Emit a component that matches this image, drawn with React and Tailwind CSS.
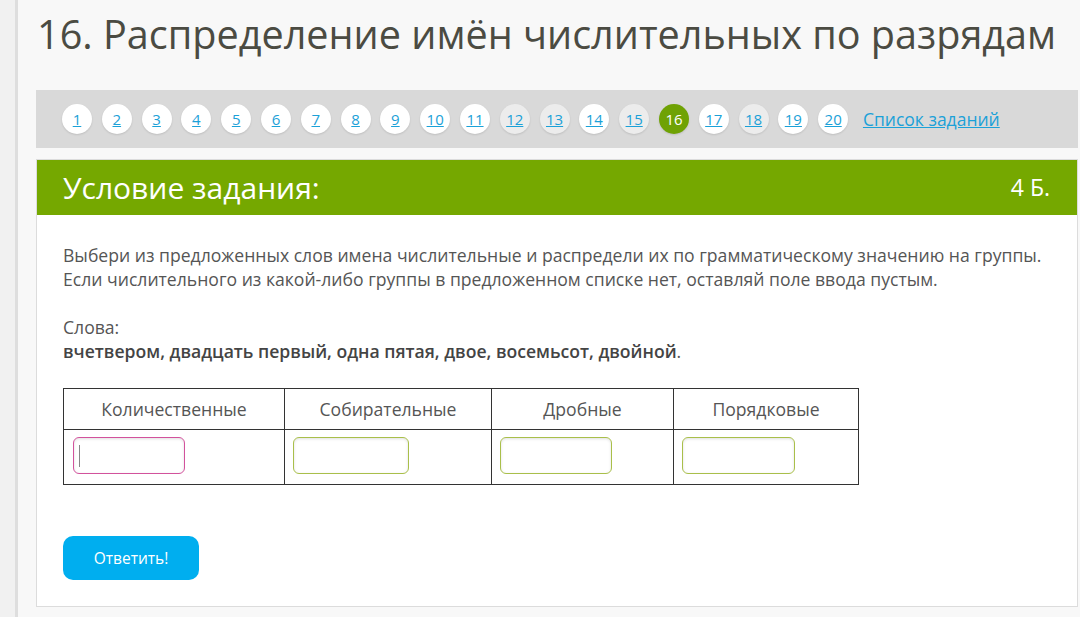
import React from "react";

const pages = [
  { n: 1 }, { n: 2 }, { n: 3 }, { n: 4 }, { n: 5 }, { n: 6 }, { n: 7 }, { n: 8 }, { n: 9 }, { n: 10 },
  { n: 11 }, { n: 12, v: true }, { n: 13, v: true }, { n: 14 }, { n: 15, v: true }, { n: 16, a: true },
  { n: 17 }, { n: 18, v: true }, { n: 19 }, { n: 20 },
];

export default function App() {
  return (
    <div className="flex w-[1080px] h-[617px] overflow-hidden bg-[#f8f8f8]" style={{ fontFamily: '"Open Sans", sans-serif' }}>
      <div className="w-[15px] shrink-0 bg-[#f1f1f1]" />
      <div className="w-[3px] shrink-0 bg-[#dedede]" />
      <div className="w-[1062px] min-w-0 shrink-0 pl-[18px] pr-[2px] flex flex-col">
        <h1 className="text-[39.6px] leading-[56px] text-[#4b4b42] pt-[6px] pl-[1px] whitespace-nowrap">
          16. Распределение имён числительных по разрядам
        </h1>
        <div className="mt-[28px] h-[58px] bg-[#d9d9d9] flex items-center pl-[26px] gap-[9.8px]">
          {pages.map((p) => (
            <div
              key={p.n}
              className={
                "w-[30px] h-[30px] shrink-0 rounded-full flex items-center justify-center text-[15px] shadow-[0_1px_2px_rgba(0,0,0,0.12)] " +
                (p.a ? "bg-[#6fa204] text-white" : p.v ? "bg-[#ececec] text-[#1ba1d8] underline" : "bg-white text-[#1ba1d8] underline")
              }
            >
              {p.n}
            </div>
          ))}
          <a className="ml-[5px] text-[17.5px] text-[#1ba1d8] underline whitespace-nowrap">Список заданий</a>
        </div>
        <div className="mt-[11px] bg-white border border-[#dcdcdc] h-[448px] flex flex-col">
          <div className="h-[55px] bg-[#75a800] flex items-center justify-between pl-[26px] pr-[27px] text-white">
            <span className="text-[30px]">Условие задания:</span>
            <span className="text-[23px]">4 Б.</span>
          </div>
          <div className="pl-[26px] pt-[28px] text-[17.6px] leading-[24px] text-[#555]">
            <p className="whitespace-nowrap">
              Выбери из предложенных слов имена числительные и распредели их по грамматическому значению на группы.
              <br />
              Если числительного из какой-либо группы в предложенном списке нет, оставляй поле ввода пустым.
            </p>
            <p className="mt-[24px]">Слова:</p>
            <p>
              <b className="font-semibold text-[#444]">вчетвером, двадцать первый, одна пятая, двое, восемьсот, двойной</b>.
            </p>
            <table className="mt-[25px] border-collapse text-[17.6px] text-[#555]">
              <thead>
                <tr className="h-[41px]">
                  <th className="w-[221px] border border-[#333] font-normal">Количественные</th>
                  <th className="w-[207px] border border-[#333] font-normal">Собирательные</th>
                  <th className="w-[182px] border border-[#333] font-normal">Дробные</th>
                  <th className="w-[185px] border border-[#333] font-normal">Порядковые</th>
                </tr>
              </thead>
              <tbody>
                <tr className="h-[55px]">
                  <td className="border border-[#333] pl-[9px] pb-[3px]">
                    <div className="w-[112px] h-[37px] rounded-[6px] border border-[#d2529c] shadow-[inset_0_1px_3px_rgba(0,0,0,0.12)] flex items-center pl-[5px]">
                      <div className="w-[1px] h-[22px] bg-[#888]" />
                    </div>
                  </td>
                  <td className="border border-[#333] pl-[8px] pb-[3px]">
                    <div className="w-[116px] h-[37px] rounded-[6px] border border-[#a9bf4a] shadow-[inset_0_1px_3px_rgba(0,0,0,0.12)]" />
                  </td>
                  <td className="border border-[#333] pl-[8px] pb-[3px]">
                    <div className="w-[112px] h-[37px] rounded-[6px] border border-[#a9bf4a] shadow-[inset_0_1px_3px_rgba(0,0,0,0.12)]" />
                  </td>
                  <td className="border border-[#333] pl-[8px] pb-[3px]">
                    <div className="w-[113px] h-[37px] rounded-[6px] border border-[#a9bf4a] shadow-[inset_0_1px_3px_rgba(0,0,0,0.12)]" />
                  </td>
                </tr>
              </tbody>
            </table>
            <button className="mt-[51px] w-[136px] h-[44px] rounded-[10px] bg-[#00aeef] text-white text-[15.5px]">
              Ответить!
            </button>
          </div>
        </div>
      </div>
    </div>
  );
}
